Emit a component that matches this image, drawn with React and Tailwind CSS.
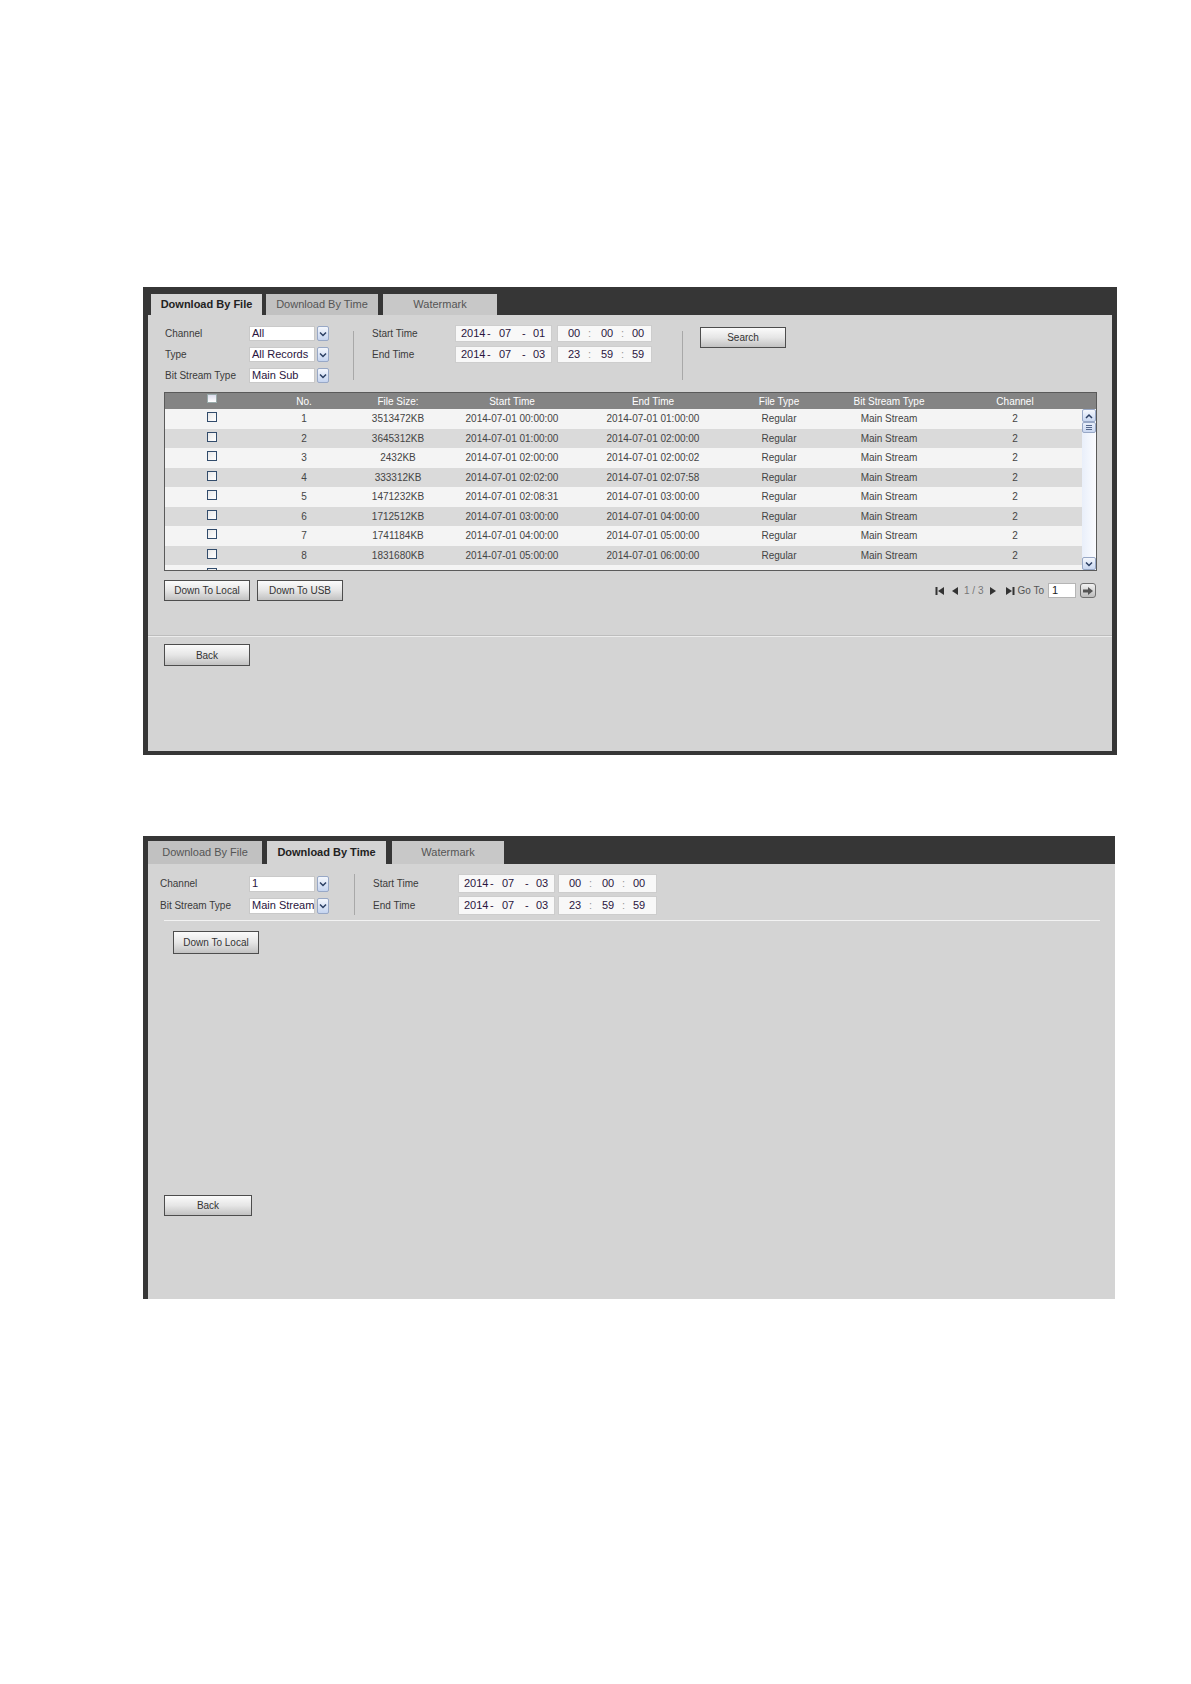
import React from 'react'

const rows = [
  ['1', '3513472KB', '2014-07-01 00:00:00', '2014-07-01 01:00:00'],
  ['2', '3645312KB', '2014-07-01 01:00:00', '2014-07-01 02:00:00'],
  ['3', '2432KB', '2014-07-01 02:00:00', '2014-07-01 02:00:02'],
  ['4', '333312KB', '2014-07-01 02:02:00', '2014-07-01 02:07:58'],
  ['5', '1471232KB', '2014-07-01 02:08:31', '2014-07-01 03:00:00'],
  ['6', '1712512KB', '2014-07-01 03:00:00', '2014-07-01 04:00:00'],
  ['7', '1741184KB', '2014-07-01 04:00:00', '2014-07-01 05:00:00'],
  ['8', '1831680KB', '2014-07-01 05:00:00', '2014-07-01 06:00:00'],
  ['9', '1819264KB', '2014-07-01 06:00:00', '2014-07-01 07:00:00'],
]

// column template shared by header and body
const cols = 'grid grid-cols-[94px_90px_98px_130px_152px_100px_120px_132px]'

function Btn({ children, className = '' }) {
  return (
    <div className={`flex w-[86px] items-center justify-center border border-[#4d4d4d] bg-linear-to-b from-[#fbfbfb] via-[#e6e6e6] to-[#c2c2c2] text-[10px] text-[#333] ${className}`}>
      {children}
    </div>
  )
}

function Chevron({ up }) {
  return (
    <svg width="8" height="6" viewBox="0 0 8 6">
      <path d={up ? 'M1 5 L4 2 L7 5' : 'M1 1.5 L4 4.5 L7 1.5'} fill="none" stroke="#2b3f63" strokeWidth="1.5" />
    </svg>
  )
}

function Select({ value, h = 'h-[15px]' }) {
  return (
    <div className={`flex w-[80px] ${h}`}>
      <div className="flex w-[66px] items-center overflow-hidden border border-[#c9c9c9] bg-white pl-[2px] text-[11px] whitespace-nowrap text-[#2a1540]">{value}</div>
      <div className="ml-[2px] flex w-[12px] items-center justify-center rounded-[2px] border border-[#98a8c6] bg-linear-to-b from-[#f4f7fd] to-[#c5d4ef]">
        <Chevron />
      </div>
    </div>
  )
}

function DateBox({ d, h }) {
  return (
    <div className={`flex w-[97px] items-center border border-[#cdcdcd] bg-[#f8f8f8] text-[11px] text-[#2a1540] ${h}`}>
      <span className="ml-[5px] w-[24px]">2014</span>
      <span className="ml-[2px] w-[4px]">-</span>
      <span className="ml-[8px] w-[12px]">07</span>
      <span className="ml-[11px] w-[4px]">-</span>
      <span className="ml-[7px]">{d}</span>
    </div>
  )
}

function TimeBox({ t, h, w = 'w-[95px]' }) {
  return (
    <div className={`flex items-center border border-[#cdcdcd] bg-[#f8f8f8] text-[11px] text-[#2a1540] ${w} ${h}`}>
      <span className="ml-[10px] w-[12px]">{t[0]}</span>
      <span className="ml-[8px] w-[3px] text-[#999]">:</span>
      <span className="ml-[10px] w-[12px]">{t[1]}</span>
      <span className="ml-[8px] w-[3px] text-[#999]">:</span>
      <span className="ml-[8px]">{t[2]}</span>
    </div>
  )
}

function Tabs({ active, widths, gaps, h }) {
  const names = ['Download By File', 'Download By Time', 'Watermark']
  const bgs = ['bg-[#c1c1c1]', 'bg-[#c1c1c1]', 'bg-[#c8c8c8]']
  return (
    <div className={`flex ${h}`}>
      {names.map((n, i) => (
        <div
          key={n}
          className={`flex items-center justify-center text-[11px] ${widths[i]} ${gaps[i]} ${
            i === active ? 'bg-[#d4d4d4] font-bold text-[#222]' : `${bgs[i]} text-[#555]`
          }`}
        >
          {n}
        </div>
      ))}
    </div>
  )
}

function Checkbox() {
  return <div className="mt-[3px] h-[10px] w-[10px] border border-[#324c6c] bg-linear-to-br from-[#e8e8e8] to-white" />
}

function Scrollbar() {
  return (
    <div className="flex w-[14px] flex-col bg-linear-to-r from-[#e9effa] to-[#fbfcff]">
      <div className="flex h-[13px] items-center justify-center rounded-[2px] border border-[#98a8c6] bg-linear-to-b from-[#f4f7fd] to-[#c9d7f0]">
        <Chevron up />
      </div>
      <div className="flex h-[11px] flex-col items-center justify-center gap-[1px] rounded-[2px] border border-[#98a8c6] bg-linear-to-b from-[#e8eefa] to-[#c9d7f0]">
        <div className="h-px w-[6px] bg-[#55688c]" />
        <div className="h-px w-[6px] bg-[#55688c]" />
        <div className="h-px w-[6px] bg-[#55688c]" />
      </div>
      <div className="flex-1" />
      <div className="flex h-[13px] items-center justify-center rounded-[2px] border border-[#98a8c6] bg-linear-to-b from-[#f4f7fd] to-[#c9d7f0]">
        <Chevron />
      </div>
    </div>
  )
}

function FileTable() {
  return (
    <div className="ml-[16px] flex h-[179px] w-[933px] flex-col border border-[#5a5a5a]">
      <div className={`${cols} h-[16px] bg-[#848484] text-[10px] text-white`}>
        <div className="flex justify-center"><div className="mt-[1px] h-[9px] w-[10px] border border-[#9aa] bg-linear-to-b from-[#dde] to-white" /></div>
        <div className="flex items-center justify-center">No.</div>
        <div className="flex items-center justify-center">File Size:</div>
        <div className="flex items-center justify-center">Start Time</div>
        <div className="flex items-center justify-center">End Time</div>
        <div className="flex items-center justify-center">File Type</div>
        <div className="flex items-center justify-center">Bit Stream Type</div>
        <div className="flex items-center justify-center">Channel</div>
      </div>
      <div className="flex min-h-0 flex-1">
        <div className="flex-1 overflow-hidden">
          {rows.map((r, i) => (
            <div key={r[0]} className={`${cols} h-[19.5px] text-[10px] text-[#444] ${i % 2 ? 'bg-[#dadada]' : 'bg-[#f4f4f4]'}`}>
              <div className="flex justify-center"><Checkbox /></div>
              <div className="flex items-center justify-center">{r[0]}</div>
              <div className="flex items-center justify-center">{r[1]}</div>
              <div className="flex items-center justify-center">{r[2]}</div>
              <div className="flex items-center justify-center">{r[3]}</div>
              <div className="flex items-center justify-center">Regular</div>
              <div className="flex items-center justify-center">Main Stream</div>
              <div className="flex items-center justify-center">2</div>
            </div>
          ))}
        </div>
        <Scrollbar />
      </div>
    </div>
  )
}

function Pager() {
  return (
    <div className="flex h-[21px] items-center text-[10px]">
      <svg width="10" height="10" viewBox="0 0 10 10"><rect x="0.5" y="1" width="2" height="8" fill="#333" /><path d="M9 1 L3 5 L9 9 Z" fill="#333" /></svg>
      <svg className="ml-[6px]" width="7" height="10" viewBox="0 0 7 10"><path d="M7 1 L1 5 L7 9 Z" fill="#333" /></svg>
      <span className="ml-[6px] text-[#777]">1 / 3</span>
      <svg className="ml-[6px]" width="7" height="10" viewBox="0 0 7 10"><path d="M0 1 L6 5 L0 9 Z" fill="#333" /></svg>
      <svg className="ml-[8px]" width="10" height="10" viewBox="0 0 10 10"><path d="M1 1 L7 5 L1 9 Z" fill="#333" /><rect x="7.5" y="1" width="2" height="8" fill="#333" /></svg>
      <span className="ml-[3px] text-[#555]">Go To</span>
      <div className="ml-[4px] flex h-[15px] w-[28px] items-center border border-[#b5b5b5] bg-white pl-[3px] text-[11px] text-[#222]">1</div>
      <div className="ml-[4px] flex h-[15px] w-[16px] items-center justify-center rounded-[3px] border border-[#707070] bg-linear-to-b from-[#f2f2f2] to-[#bdbdbd]">
        <svg width="10" height="8" viewBox="0 0 10 8"><path d="M0 2.5 H5 V0 L10 4 L5 8 V5.5 H0 Z" fill="#555" /></svg>
      </div>
    </div>
  )
}

function ByFilePanel() {
  return (
    <div className="flex h-[468px] w-[974px] flex-col bg-[#363636] px-[5px] pt-[7px] pb-[4px]">
      <Tabs active={0} h="h-[21px]" widths={['w-[111px]', 'w-[112px]', 'w-[114px]']} gaps={['ml-[3px]', 'ml-[4px]', 'ml-[5px]']} />
      <div className="flex flex-1 flex-col bg-[#d4d4d4] text-[10px] text-[#3a3a3a]">
        <div className="flex h-[77px] items-start pt-[10px] pl-[17px]">
          <div className="mt-[1px] flex flex-col gap-[6px]">
            {[['Channel', 'All'], ['Type', 'All Records'], ['Bit Stream Type', 'Main Sub']].map(([l, v]) => (
              <div key={l} className="flex h-[15px] items-center">
                <span className="w-[84px]">{l}</span>
                <Select value={v} />
              </div>
            ))}
          </div>
          <div className="mt-[6px] ml-[24px] h-[49px] w-px bg-[#a8a8a8]" />
          <div className="ml-[18px] flex flex-col gap-[4px]">
            {[['Start Time', '01', ['00', '00', '00']], ['End Time', '03', ['23', '59', '59']]].map(([l, d, t]) => (
              <div key={l} className="flex items-center">
                <span className="w-[83px]">{l}</span>
                <DateBox d={d} h="h-[17px]" />
                <div className="ml-[5px]"><TimeBox t={t} h="h-[17px]" /></div>
              </div>
            ))}
          </div>
          <div className="mt-[6px] ml-[30px] h-[49px] w-px bg-[#a8a8a8]" />
          <Btn className="mt-[2px] ml-[17px] h-[21px]">Search</Btn>
        </div>
        <FileTable />
        <div className="mt-[9px] flex items-center justify-between pr-[16px] pl-[16px]">
          <div className="flex gap-[7px]">
            <Btn className="h-[21px]">Down To Local</Btn>
            <Btn className="h-[21px]">Down To USB</Btn>
          </div>
          <Pager />
        </div>
        <div className="mt-[34px] h-px bg-[#bdbdbd]" />
        <div className="h-px bg-[#ececec]" />
        <Btn className="mt-[7px] ml-[16px] h-[22px]">Back</Btn>
      </div>
    </div>
  )
}

function ByTimePanel() {
  return (
    <div className="mt-[81px] flex h-[463px] w-[972px] flex-col bg-[#363636] pt-[5px] pl-[5px]">
      <Tabs active={1} h="h-[23px]" widths={['w-[114px]', 'w-[119px]', 'w-[112px]']} gaps={['ml-0', 'ml-[5px]', 'ml-[6px]']} />
      <div className="flex flex-1 flex-col bg-[#d4d4d4] text-[10px] text-[#3a3a3a]">
        <div className="flex items-start pt-[10px] pl-[12px]">
          <div className="flex flex-col gap-[3px]">
            {[['Channel', '1'], ['Bit Stream Type', 'Main Stream']].map(([l, v]) => (
              <div key={l} className="flex h-[19px] items-center">
                <span className="w-[89px]">{l}</span>
                <Select value={v} h="h-[16px]" />
              </div>
            ))}
          </div>
          <div className="ml-[25px] h-[41px] w-px bg-[#a8a8a8]" />
          <div className="ml-[18px] flex flex-col gap-[3px]">
            {[['Start Time', '03', ['00', '00', '00']], ['End Time', '03', ['23', '59', '59']]].map(([l, d, t]) => (
              <div key={l} className="flex h-[19px] items-center">
                <span className="w-[85px]">{l}</span>
                <DateBox d={d} h="h-[19px]" />
                <div className="ml-[3px]"><TimeBox t={t} h="h-[19px]" w="w-[99px]" /></div>
              </div>
            ))}
          </div>
        </div>
        <div className="mt-[5px] ml-[16px] h-px w-[936px] bg-[#f2f2f2]" />
        <Btn className="mt-[10px] ml-[25px] h-[23px]">Down To Local</Btn>
        <Btn className="mt-[241px] ml-[16px] h-[21px] w-[88px]">Back</Btn>
      </div>
    </div>
  )
}

export default function App() {
  return (
    <div className="min-h-[1684px] w-[1191px] bg-white pt-[287px] pl-[143px] font-['Liberation_Sans',Arial,sans-serif]">
      <ByFilePanel />
      <ByTimePanel />
    </div>
  )
}
